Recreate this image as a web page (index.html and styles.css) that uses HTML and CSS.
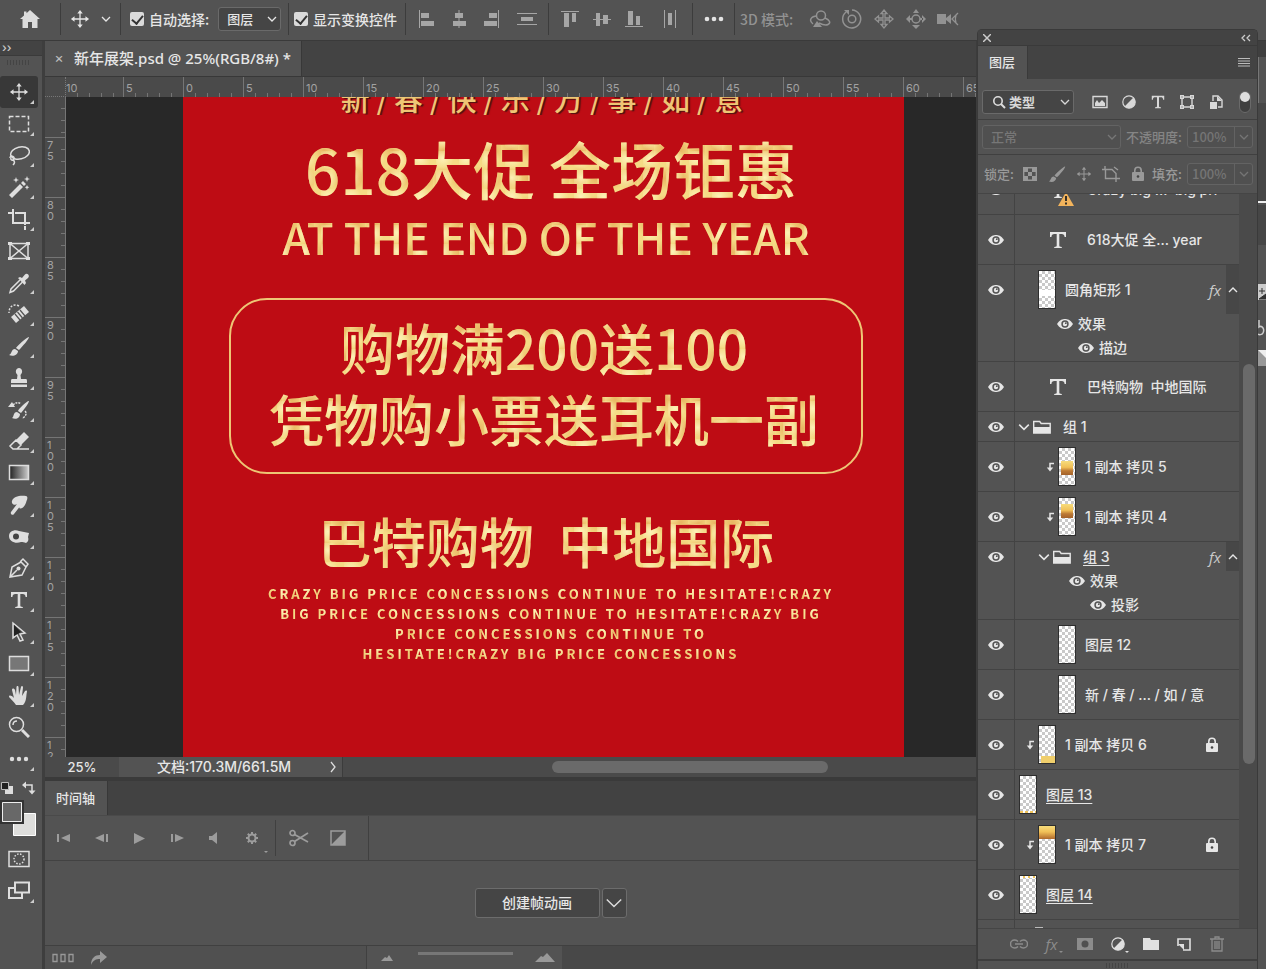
FILE: index.html
```
<!DOCTYPE html>
<html lang="zh-CN">
<head>
<meta charset="utf-8">
<meta name="viewport" content="width=device-width, initial-scale=1">
<title>新年展架.psd</title>
<link rel="stylesheet" href="styles.css">
</head>
<body>
<svg class="sprite" aria-hidden="true">
  <symbol id="move" viewBox="0 0 22 22"><path d="M11 3v16M3 11h16" fill="none" stroke="currentColor" stroke-width="1.4"/><path d="M11 1l3 4H8zM11 21l3-4H8zM1 11l4-3v6zM21 11l-4-3v6z" fill="currentColor"/></symbol>
  <symbol id="chev" viewBox="0 0 10 10"><path d="M1 3l4 4 4-4" fill="none" stroke="currentColor" stroke-width="1.3"/></symbol>
  <symbol id="chev-up" viewBox="0 0 10 10"><path d="M1 7l4-4 4 4" fill="none" stroke="currentColor" stroke-width="1.4"/></symbol>
  <symbol id="eye" viewBox="0 0 16 12"><path d="M0 6C3 1.500 5.500 1 8 1s5 .5 8 5c-3 4.500-5.500 5-8 5S3 10.500 0 6z" fill="currentColor"/><circle cx="8" cy="6" r="3.700" fill="#535353"/><circle cx="8" cy="6" r="2.200" fill="currentColor"/><circle cx="8.800" cy="5.200" r=".9" fill="#535353"/></symbol>
  <symbol id="type" viewBox="0 0 18 18"><path d="M1 1h16v5h-1.400c-.3-2.200-1-3-3-3H10.300v11.500c0 1 .6 1.300 2.500 1.400V17H5.200v-1.100c1.900-.1 2.500-.4 2.500-1.400V3H5.400c-2 0-2.700.8-3 3H1z" fill="currentColor"/></symbol>
  <symbol id="folder" viewBox="0 0 18 14"><path d="M.7 13V1.500h6l1.500 2h9V13z" fill="none" stroke="currentColor" stroke-width="1.400"/><path d="M1 7h16v6H1z" fill="currentColor"/></symbol>
  <symbol id="clip" viewBox="0 0 8 10"><path d="M8 1.500H4V6" fill="none" stroke="currentColor" stroke-width="1.500"/><path d="M.8 5.500h6.400L4 9.500z" fill="currentColor"/></symbol>
  <symbol id="lock" viewBox="0 0 14 16"><path d="M3.800 7V4.500a3.200 3.200 0 0 1 6.400 0V7" fill="none" stroke="currentColor" stroke-width="1.600"/><rect x="1" y="6" width="12" height="9" rx="1" fill="currentColor"/><circle cx="7" cy="10.500" r="1.300" fill="#444"/></symbol>
  <symbol id="adjust" viewBox="0 0 14 14"><circle cx="7" cy="7" r="6.200" fill="none" stroke="currentColor" stroke-width="1.200"/><path d="M11.400 2.600A6.200 6.200 0 1 1 2.600 11.400z" fill="currentColor"/></symbol>
</svg>

<div class="app">
  <header class="options">
    <button class="home" aria-label="主页"><svg width="22" height="20" viewBox="0 0 22 20"><path d="M11 1l10 9h-2.500v9H13v-6H9v6H3.500v-9H1L5 6.400V2.500h2.500v1.700z" fill="#dcdcdc"/></svg></button>
    <div class="group tool-preset"><svg class="i20"><use href="#move"/></svg><button aria-label="工具预设"><svg class="i10"><use href="#chev"/></svg></button></div>
    <div class="group auto">
      <label class="tick"><input type="checkbox" checked>自动选择:</label>
      <span class="select"><select aria-label="自动选择目标"><option>图层</option></select><svg class="i10"><use href="#chev"/></svg></span>
    </div>
    <div class="group show"><label class="tick"><input type="checkbox" checked>显示变换控件</label></div>
    <div class="group align">
      <button aria-label="左对齐"><svg class="i20" viewBox="0 0 20 20"><path d="M2.500 1v18" class="ln"/><path d="M4 4h8v5H4zM4 12h13v5H4z"/></svg></button>
      <button aria-label="水平居中对齐"><svg class="i20" viewBox="0 0 20 20"><path d="M10 1v18" class="ln"/><path d="M6 4h8v5H6zM4 12h13v5H4z"/></svg></button>
      <button aria-label="右对齐"><svg class="i20" viewBox="0 0 20 20"><path d="M17.500 1v18" class="ln"/><path d="M8 4h8v5H8zM3 12h13v5H3z"/></svg></button>
      <button class="wide" aria-label="垂直分布"><svg class="i20" viewBox="0 0 20 20"><path d="M0 4.500h20M0 15.500h20" class="ln"/><path d="M4 8h12v4H4z"/></svg></button>
    </div>
    <div class="group align second">
      <button aria-label="顶对齐"><svg class="i20" viewBox="0 0 20 20"><path d="M1 2.500h18" class="ln"/><path d="M4 4h5v14H4zM12 4h4v9h-4z"/></svg></button>
      <button aria-label="垂直居中对齐"><svg class="i20" viewBox="0 0 20 20"><path d="M1 10.500h18" class="ln"/><path d="M4 4h4v13H4zM11 6h5v9h-5z"/></svg></button>
      <button aria-label="底对齐"><svg class="i20" viewBox="0 0 20 20"><path d="M1 17.500h18" class="ln"/><path d="M4 2h5v14H4zM12 7h4v9h-4z"/></svg></button>
      <button class="wide" aria-label="水平分布"><svg class="i20" viewBox="0 0 20 20"><path d="M4.500 1v18M15.500 1v18" class="ln"/><path d="M8 4h4v12H8z"/></svg></button>
    </div>
    <div class="group more"><button aria-label="更多"><svg width="20" height="6" viewBox="0 0 20 6"><g fill="#e4e4e4"><circle cx="3" cy="3" r="2.300"/><circle cx="10" cy="3" r="2.300"/><circle cx="17" cy="3" r="2.300"/></g></svg></button></div>
    <div class="group mode">
      <span>3D 模式:</span>
      <button aria-label="环绕"><svg class="i22" viewBox="0 0 22 22"><g fill="none" stroke="#929292" stroke-width="1.500"><circle cx="12" cy="7.500" r="4.500"/><path d="M7 8C1 9 0 13 4 16M16 10c5 2 6 5 3 6.500-2 1-6 0-9-1.500"/></g><path d="M4 19h9l-5-6z" fill="#929292"/></svg></button>
      <button aria-label="滚动"><svg class="i22" viewBox="0 0 22 22"><g fill="none" stroke="#929292" stroke-width="1.500"><circle cx="11" cy="11" r="3.800"/><path d="M5 4a9 9 0 1 0 6-2"/></g><path d="M3 2h5v5z" fill="#929292"/></svg></button>
      <button aria-label="平移"><svg class="i22" viewBox="0 0 22 22"><path d="M11 2l3 3.500h-2v4.500h4.500V8l3.500 3-3.500 3v-2H12v4.500h2L11 20l-3-3.500h2V12H5.500v2L2 11l3.500-3v2H10V5.500H8z" fill="none" stroke="#929292" stroke-width="1.300"/></svg></button>
      <button aria-label="滑动"><svg class="i22" viewBox="0 0 22 22"><circle cx="11" cy="11" r="4" fill="none" stroke="#929292" stroke-width="1.500"/><path d="M11 1l3 4H8zM7 17h8l-4 4zM1 11l4-4v8zM21 11l-4-4v8zM4 10h3v2H4zM15 10h3v2h-3z" fill="#929292"/></svg></button>
      <button aria-label="缩放相机"><svg class="i22" viewBox="0 0 22 22"><path d="M0 6h9v10H0zM9 10l5-4v10l-5-4z" fill="#929292"/><path d="M21 5l-6 6 6 6M19 7c-1 3-1 5 0 8" fill="none" stroke="#929292" stroke-width="1.300"/></svg></button>
    </div>
  </header>

  <aside class="toolbar">
    <div class="expand">››</div>
    <div class="grip"></div>
    <nav class="tools">
      <button class="on" aria-label="移动"><svg class="i20"><use href="#move"/></svg></button>
      <button aria-label="选框"><svg class="i22" viewBox="0 0 22 22"><rect x="1.500" y="3.500" width="19" height="15" class="st" stroke-dasharray="4 2"/></svg></button>
      <button aria-label="套索"><svg class="i22" viewBox="0 0 22 22"><ellipse cx="12" cy="9" rx="9.500" ry="6" transform="rotate(-14 12 9)" class="st"/><path d="M2 14c0-3 5-2 4 1-1 2-4 1-3-1M5 16c2 1 2 3 0 5" class="st"/></svg></button>
      <button aria-label="魔棒"><svg class="i22" viewBox="0 0 22 22"><path d="M1 19L12 8l3 3L4 22zM13 7l2-2 3 3-2 2zM8 1l.8 2.200L11 4l-2.200.8L8 7l-.8-2.200L5 4l2.200-.8zM19 0l.8 2.200L22 3l-2.200.8L19 6l-.8-2.200L16 3l2.200-.8zM19 9l.7 1.600 1.600.7-1.600.7L19 14l-.7-2-1.600-.7 1.600-.7z"/></svg></button>
      <button aria-label="裁剪"><svg class="i22" viewBox="0 0 22 22"><path d="M5 1v14h12M0 5h4M7 5h10v12M17 18v4M18 15h4" class="st w2"/></svg></button>
      <button class="flat" aria-label="图框"><svg class="i22" viewBox="0 0 22 22"><path d="M2 3.500h18v15H2zM2 3.500l18 15M20 3.500l-18 15" class="st"/><path d="M0 2h4v3H0zM18 2h4v3h-4zM0 17h4v3H0zM18 17h4v3h-4z"/></svg></button>
      <button aria-label="吸管"><svg class="i22" viewBox="0 0 22 22"><path d="M12 8l-9 9-1 3.500L5.500 19l9-9" class="st"/><path d="M10 6l2-1 2 1 2.500-3c2.500-3 6 .5 3.500 3l-3 2.500 1 2.500-1.500 2z"/></svg></button>
      <button aria-label="修复画笔"><svg class="i22" viewBox="0 0 22 22"><path d="M3 14L16 3l5 6L8 20z"/><path d="M12 7l5 6M9.500 9l5 6M7 11l5 6" stroke="#535353" stroke-width="1.200"/><path d="M11 3C5 0 1 4 1 10" class="st" stroke-dasharray="2 1.500"/></svg></button>
      <button aria-label="画笔"><svg class="i22" viewBox="0 0 22 22"><path d="M21 2c-1-1-12 9-13 11l3 2C14 12 21 4 21 2zM7 14c-4 0-3 5-6 6 4 2 9 0 9-4z"/></svg></button>
      <button aria-label="图章"><svg class="i22" viewBox="0 0 22 22"><path d="M9 12l.5-4C6.500 5 8 1 11 1s4.500 4 1.500 7l.5 4h5c1 0 1 1 1 4H3c0-3 0-4 1-4zM3 17.500h16V20H3z"/></svg></button>
      <button aria-label="历史画笔"><svg class="i22" viewBox="0 0 22 22"><path d="M21 2c-1-1-10 7-11 10l3 2C15 12 21 4 21 2zM9 13c-4 0-3 5-5 6 4 2 8 0 8-4zM0 8l4-5 3 5z"/><path d="M5 6c3-3 6-3 8-1M17 12c3 3-1 7-3 7" class="st" stroke-dasharray="2 1"/></svg></button>
      <button aria-label="橡皮擦"><svg class="i22" viewBox="0 0 22 22"><path d="M8 10l8-8 5 5-8 8z"/><path d="M8 10l-6 6 3 3h4l4-4zM6 19h15" class="st"/></svg></button>
      <button aria-label="渐变"><svg class="i22" viewBox="0 0 22 22"><defs><linearGradient id="g"><stop stop-color="#222"/><stop offset="1" stop-color="#ccc"/></linearGradient></defs><rect x="1.500" y="3.500" width="19" height="14" fill="url(#g)" stroke="#ddd" stroke-width="1.500"/></svg></button>
      <button aria-label="涂抹"><svg class="i22" viewBox="0 0 22 22"><path d="M4 7c1-5 9-6 14-5 2 .5 1.500 3 .5 5-1 4-3 7-6 7.500-1 0-1.500-.5-1-1.500L6 20c-1.500 2-4 0-3-2l6-8c-2 2-6 0-5-3z"/></svg></button>
      <button aria-label="减淡"><svg class="i22" viewBox="0 0 22 22"><path d="M1 10C1 5 7 3 11 5l10 2-1 4c1 3 0 5-2 6-2-1-3-1-5-1-5 2-12 0-12-6z"/><circle cx="8" cy="10.500" r="3" class="hole"/></svg></button>
      <button aria-label="钢笔"><svg class="i22" viewBox="0 0 22 22"><path d="M2 20l2-10 9-5 5 5-4 8zM2 20l7-7M12 5l3-3 5 5-2 3" class="st"/><circle cx="10.500" cy="11.500" r="2"/></svg></button>
      <button aria-label="文字"><svg class="i18"><use href="#type"/></svg></button>
      <button aria-label="路径选择"><svg class="i22" viewBox="0 0 22 22"><path d="M5 2v15l4-3 3 6 3-1-3-6 5-1z" class="st"/><path d="M6 4v11l7-4z" fill="#222"/></svg></button>
      <button aria-label="矩形"><svg class="i22" viewBox="0 0 22 22"><rect x="1.500" y="3.500" width="19" height="14" fill="#777" stroke="#ddd" stroke-width="1.500"/></svg></button>
      <button aria-label="抓手"><svg class="i22" viewBox="0 0 22 22"><path d="M8 20C6 17 3 14 1 12c0-2 2-2 5 1L4 5c0-2 2-2 3 0l1 5 .5-8c0-1.500 2-1.500 2 0l.5 8 2-8c.5-1.500 2-1 2 .5L14 11l3-5c1-1 2-.5 2 .5C18 10 19 16 15 20z"/></svg></button>
      <button class="flat" aria-label="缩放"><svg class="i22" viewBox="0 0 22 22"><circle cx="8.500" cy="8.500" r="7" class="st"/><path d="M14 14l7 7" class="st w3"/><path d="M5 9c0-3 2-4 4-4" class="st"/></svg></button>
      <button aria-label="编辑工具栏"><svg class="i22" viewBox="0 0 22 22"><circle cx="4" cy="11" r="2.200"/><circle cx="11" cy="11" r="2.200"/><circle cx="18" cy="11" r="2.200"/></svg></button>
    </nav>
    <div class="mini"><svg width="14" height="14" viewBox="0 0 14 14"><path d="M5 5h8v8H5z" fill="#ddd"/><path d="M1.500 1.500h7v7h-7z" fill="#222" stroke="#bbb"/></svg><svg width="14" height="14" viewBox="0 0 14 14"><path d="M2 4h8v6" fill="none" stroke="#ddd" stroke-width="1.500"/><path d="M0 4l4-3.500v7zM6.500 9.500h7L10 13.500z" fill="#ddd"/></svg></div>
    <svg class="swatches" width="38" height="38" viewBox="0 0 38 38"><path d="M13.500 13.500h22v22h-22z" fill="#dededc" stroke="#fff"/><path d="M1 1h22v22H1z" fill="#686868" stroke="#333" stroke-width="2"/><path d="M2.500 2.500h19v19h-19z" fill="none" stroke="#eee"/></svg>
    <nav class="modes">
      <button class="flat" aria-label="快速蒙版"><svg class="i22" viewBox="0 0 22 22"><rect x="1" y="3.500" width="20" height="15" class="st"/><circle cx="11" cy="11" r="5" class="st" stroke-dasharray="1.500 1.500"/></svg></button>
      <button aria-label="屏幕模式"><svg class="i22" viewBox="0 0 22 22"><path d="M7 2.500h14v10H7zM7 8H1v10h13v-5" class="st w2"/></svg></button>
    </nav>
  </aside>

  <main class="work">
    <div class="tabs"><div class="tab"><button aria-label="关闭">×</button><span>新年展架.psd @ 25%(RGB/8#) *</span></div></div>
    <div class="ruler-row"><div class="corner"></div><div class="ruler-h"><span>10</span><span>5</span><span>0</span><span>5</span><span>10</span><span>15</span><span>20</span><span>25</span><span>30</span><span>35</span><span>40</span><span>45</span><span>50</span><span>55</span><span>60</span><span>65</span></div></div>
    <div class="stage">
      <div class="ruler-v"><span></span><span>7<br>5</span><span>8<br>0</span><span>8<br>5</span><span>9<br>0</span><span>9<br>5</span><span>1<br>0<br>0</span><span>1<br>0<br>5</span><span>1<br>1<br>0</span><span>1<br>1<br>5</span><span>1<br>2<br>0</span><span>1<br>2<br>5</span></div>
      <div class="canvas">
        <article class="poster">
          <p class="greet"><span>新 / 春 / 快 / 乐 / 万 / 事 / 如 / 意</span></p>
          <h1 class="gold">618大促 全场钜惠</h1>
          <h2 class="gold">AT THE END OF THE YEAR</h2>
          <div class="offer"><p class="gold">购物满200送100</p><p class="gold">凭物购小票送耳机一副</p></div>
          <p class="gold brand">巴特购物&nbsp; 中地国际</p>
          <p class="gold small">CRAZY BIG PRICE CONCESSIONS CONTINUE TO HESITATE!CRAZY<br>BIG PRICE CONCESSIONS CONTINUE TO HESITATE!CRAZY BIG<br>PRICE CONCESSIONS CONTINUE TO<br>HESITATE!CRAZY BIG PRICE CONCESSIONS</p>
        </article>
      </div>
    </div>
    <div class="status"><span class="zoom">25%</span><div class="doc"><span>文档:170.3M/661.5M</span><svg width="6" height="12" viewBox="0 0 6 12"><path d="M1 1l4 5-4 5" fill="none" stroke="#ddd" stroke-width="1.300"/></svg></div><div class="hscroll"><i></i></div></div>
    <section class="timeline">
      <div class="tabs2"><span>时间轴</span></div>
      <div class="controls">
        <div class="play">
          <button aria-label="首帧"><svg viewBox="0 0 18 18"><path d="M2 5h2v8H2zM15 5v8L6 9z"/></svg></button>
          <button aria-label="上一帧"><svg viewBox="0 0 18 18"><path d="M13 5h2v8h-2zM11 5v8L2 9z"/></svg></button>
          <button aria-label="播放"><svg viewBox="0 0 18 18"><path d="M3 4v11l11-5.500z"/></svg></button>
          <button aria-label="下一帧"><svg viewBox="0 0 18 18"><path d="M2 5h2v8H2zM6 5v8l9-4z"/></svg></button>
          <button aria-label="静音"><svg viewBox="0 0 18 18"><path d="M2 7h3l5-4v12l-5-4H2z"/></svg></button>
          <button class="corner-mark" aria-label="设置"><svg viewBox="0 0 18 18"><circle cx="7" cy="9" r="3.500" fill="none" stroke="currentColor" stroke-width="2"/><path d="M7 3v2.500M7 12.500V15M1 9h2.500M10.500 9H13M2.800 4.800l1.700 1.700M9.500 11.500l1.700 1.700M2.800 13.200l1.700-1.700M9.500 6.500l1.700-1.700" stroke="currentColor" stroke-width="2"/></svg></button>
        </div>
        <div class="cut">
          <button aria-label="拆分"><svg class="i20" viewBox="0 0 20 20"><g fill="none" stroke="currentColor" stroke-width="1.700"><circle cx="3.500" cy="5" r="2.500"/><circle cx="3.500" cy="15" r="2.500"/><path d="M5.500 6.500L19 14M5.500 13.500L19 5"/></g></svg></button>
          <button aria-label="过渡"><svg viewBox="0 0 18 18"><path d="M2 2h14v14H2z" fill="none" stroke="currentColor" stroke-width="1.500"/><path d="M16 2v14H2z"/></svg></button>
        </div>
      </div>
      <div class="body"><button class="create">创建帧动画</button><button class="drop" aria-label="更多动画类型"><svg width="18" height="18" viewBox="0 0 10 10"><path d="M1 3l4 4 4-4" fill="none" stroke="#ddd" stroke-width=".8"/></svg></button></div>
      <div class="foot">
        <div class="foot-left"><svg width="22" height="10" viewBox="0 0 22 10"><path d="M1 1.500h4v7H1zM9 1.500h4v7H9zM17 1.500h4v7h-4z" fill="none" stroke="#999" stroke-width="1.300"/></svg><svg width="18" height="14" viewBox="0 0 18 14"><path d="M1 14C1 7 5 4 10 4V0l7 6-7 6V8C6 8 3 9 1 14z" fill="#999"/></svg></div>
        <div class="foot-zoom"><svg width="12" height="6" viewBox="0 0 12 6"><path d="M0 6l4-4 2 1 2-3 4 6z" fill="#999"/></svg><i></i><svg width="20" height="9" viewBox="0 0 20 9"><path d="M0 9l6-6 2 1 4-4 8 9z" fill="#999"/></svg></div>
      </div>
    </section>
  </main>

  <aside class="dock"><div class="dock-strip"><i class="d1"></i><i class="d2"></i><i class="d3"></i><i class="d4"></i><i class="d5"></i><svg width="8" height="100" viewBox="0 0 8 100"><path d="M0 15h8v16H0z" fill="#ccc"/><path d="M1 22h6M4 19v6M1 30l7-5v5z" stroke="#333" fill="#333"/><path d="M1 51v7c3-2 6 2 4 6-1 2-4 2-5 1" fill="none" stroke="#ccc" stroke-width="1.500"/><path d="M0 81h8v16H0z" fill="#999"/><path d="M0 81l8 8v-8z" fill="#eee"/></svg></div></aside>

  <section class="panel">
    <div class="panel-bar"><button aria-label="关闭面板"><svg width="8" height="8" viewBox="0 0 8 8"><path d="M0 0l8 8M8 0L0 8" stroke="#ccc" stroke-width="1.500"/></svg></button><button aria-label="折叠"><svg width="10" height="8" viewBox="0 0 10 8"><path d="M4 1L1 4l3 3M9 1L6 4l3 3" fill="none" stroke="#ccc" stroke-width="1.300"/></svg></button></div>
    <div class="panel-tabs"><span>图层</span><button aria-label="面板菜单"><svg width="12" height="9" viewBox="0 0 12 9"><path d="M0 .5h12M0 3h12M0 5.500h12M0 8h12" stroke="#bbb"/></svg></button></div>
    <div class="filter">
      <span class="select kind"><svg class="i14" viewBox="0 0 14 14"><circle cx="6" cy="6" r="4.200" fill="none" stroke="#ddd" stroke-width="1.600"/><path d="M9 9l4 4" stroke="#ddd" stroke-width="2"/></svg><select aria-label="筛选类型"><option>类型</option></select><svg class="i10"><use href="#chev"/></svg></span>
      <button aria-label="像素图层"><svg width="16" height="14" viewBox="0 0 16 14"><path d="M1 1.500h14v11H1z" fill="none" stroke="currentColor" stroke-width="1.400"/><path d="M3 11V8l2-3 2 3 3-3 3 3v3z" fill="currentColor"/></svg></button>
      <button aria-label="调整图层"><svg class="i14"><use href="#adjust"/></svg></button>
      <button aria-label="文字图层"><svg class="i14"><use href="#type"/></svg></button>
      <button aria-label="形状图层"><svg class="i14" viewBox="0 0 14 14"><path d="M2 2h10v10H2z" fill="none" stroke="currentColor" stroke-width="1.400"/><path d="M0 0h4v4H0zM10 0h4v4h-4zM0 10h4v4H0zM10 10h4v4h-4z" fill="currentColor"/><path d="M1.500 1.500h1v1h-1zM11.500 1.500h1v1h-1zM1.500 11.500h1v1h-1zM11.500 11.500h1v1h-1z" fill="#444"/></svg></button>
      <button aria-label="智能对象"><svg class="i14" viewBox="0 0 14 14"><path d="M4 6V1h5l4 4v7H9" fill="none" stroke="currentColor" stroke-width="1.400"/><path d="M8 1v5h5M1 7h7v7H1z" fill="currentColor"/></svg></button>
      <button class="switch" aria-label="打开筛选"></button>
    </div>
    <div class="blend">
      <span class="select mode-sel"><select aria-label="混合模式" disabled><option>正常</option></select><svg class="i10"><use href="#chev"/></svg></span>
      <label for="op">不透明度:</label><span class="num"><input id="op" value="100%" disabled><button aria-label="不透明度滑块"><svg class="i10"><use href="#chev"/></svg></button></span>
    </div>
    <div class="locks">
      <span class="cap">锁定:</span>
      <button aria-label="锁定透明像素"><svg class="i14" viewBox="0 0 14 14"><path d="M.7.7h12.600v12.600H.7z" fill="none" stroke="currentColor" stroke-width="1.400"/><path d="M1 1h4v4H1zM9 1h4v4H9zM5 5h4v4H5zM1 9h4v4H1zM9 9h4v4H9z" fill="currentColor"/></svg></button>
      <button aria-label="锁定图像像素"><svg class="i18" viewBox="0 0 22 22"><path d="M21 2c-1-1-12 9-13 11l3 2C14 12 21 4 21 2zM7 14c-4 0-3 5-6 6 4 2 9 0 9-4z" fill="currentColor"/></svg></button>
      <button aria-label="锁定位置"><svg class="i16"><use href="#move"/></svg></button>
      <button aria-label="防止嵌套"><svg width="18" height="16" viewBox="0 0 18 16"><path d="M3 0v3M0 3.500h10l4 4V13M3.500 3.500v9H18M14 13v3M12 1l4 3" fill="none" stroke="currentColor" stroke-width="1.400"/></svg></button>
      <button aria-label="锁定全部"><svg class="i16"><use href="#lock"/></svg></button>
      <label for="fill">填充:</label><span class="num"><input id="fill" value="100%" disabled><button aria-label="填充滑块"><svg class="i10"><use href="#chev"/></svg></button></span>
    </div>
    <div class="list-wrap">
      <ul class="list">
        <li class="cut-row"><button class="eye"><svg><use href="#eye"/></svg></button><div class="cell"><div class="line text-line"><svg class="i18"><use href="#type"/></svg><span>Crazy big ...&nbsp; big pri</span><svg class="warn" width="16" height="14" viewBox="0 0 16 14"><path d="M8 0l8 14H0z" fill="#f3b45c"/><path d="M8 4v5M8 10.500v2" stroke="#222" stroke-width="1.800"/></svg></div></div></li>
        <li><button class="eye"><svg><use href="#eye"/></svg></button><div class="cell"><div class="line text-line"><svg class="i18"><use href="#type"/></svg><span>618大促 全... year</span></div></div></li>
        <li><button class="eye"><svg><use href="#eye"/></svg></button><div class="cell tall"><div class="line l1"><i class="lead"></i><i class="thumb band"></i><span>圆角矩形 1</span><em>fx</em><button class="fold"><svg class="i10"><use href="#chev-up"/></svg></button></div><div class="fx f1"><svg><use href="#eye"/></svg>效果</div><div class="fx f2"><svg><use href="#eye"/></svg>描边</div></div></li>
        <li><button class="eye"><svg><use href="#eye"/></svg></button><div class="cell"><div class="line text-line"><svg class="i18"><use href="#type"/></svg><span>巴特购物&nbsp; 中地国际</span></div></div></li>
        <li><button class="eye"><svg><use href="#eye"/></svg></button><div class="cell"><div class="line grp"><svg class="i12"><use href="#chev"/></svg><svg class="fold-ico"><use href="#folder"/></svg><span>组 1</span></div></div></li>
        <li><button class="eye"><svg><use href="#eye"/></svg></button><div class="cell"><div class="line l2"><i class="lead"><svg><use href="#clip"/></svg></i><i class="thumb gold-mid"></i><span>1 副本 拷贝 5</span></div></div></li>
        <li><button class="eye"><svg><use href="#eye"/></svg></button><div class="cell"><div class="line l2"><i class="lead"><svg><use href="#clip"/></svg></i><i class="thumb gold-high"></i><span>1 副本 拷贝 4</span></div></div></li>
        <li><button class="eye"><svg><use href="#eye"/></svg></button><div class="cell grp-tall"><div class="line grp in"><svg class="i12"><use href="#chev"/></svg><svg class="fold-ico"><use href="#folder"/></svg><span><u>组 3</u></span><em>fx</em><button class="fold"><svg class="i10"><use href="#chev-up"/></svg></button></div><div class="fx f3"><svg><use href="#eye"/></svg>效果</div><div class="fx f4"><svg><use href="#eye"/></svg>投影</div></div></li>
        <li><button class="eye"><svg><use href="#eye"/></svg></button><div class="cell"><div class="line l2"><i class="lead"></i><i class="thumb"></i><span>图层 12</span></div></div></li>
        <li><button class="eye"><svg><use href="#eye"/></svg></button><div class="cell"><div class="line l2"><i class="lead"></i><i class="thumb"></i><span>新 / 春 / ... / 如 / 意</span></div></div></li>
        <li><button class="eye"><svg><use href="#eye"/></svg></button><div class="cell"><div class="line l1"><i class="lead"><svg><use href="#clip"/></svg></i><i class="thumb gold-low"></i><span>1 副本 拷贝 6</span><svg class="lk"><use href="#lock"/></svg></div></div></li>
        <li><button class="eye"><svg><use href="#eye"/></svg></button><div class="cell"><div class="line"><i class="lead"></i><i class="thumb edge-low"></i><span><u>图层 13</u></span></div></div></li>
        <li><button class="eye"><svg><use href="#eye"/></svg></button><div class="cell"><div class="line l1"><i class="lead"><svg><use href="#clip"/></svg></i><i class="thumb gold-top"></i><span>1 副本 拷贝 7</span><svg class="lk"><use href="#lock"/></svg></div></div></li>
        <li><button class="eye"><svg><use href="#eye"/></svg></button><div class="cell"><div class="line"><i class="lead"></i><i class="thumb edge-top"></i><span><u>图层 14</u></span></div></div></li>
        <li class="tail"><i class="eye"></i><div class="cell"><i class="stub"></i></div></li>
      </ul>
      <div class="vscroll"><i></i></div>
    </div>
    <div class="actions">
      <button aria-label="链接图层"><svg width="18" height="10" viewBox="0 0 18 10"><path d="M8 2.500C6.500 1 5.500 1 4.500 1a4 4 0 0 0 0 8c1 0 2 0 3.500-1.500M10 2.500C11.500 1 12.500 1 13.500 1a4 4 0 0 1 0 8c-1 0-2 0-3.500-1.500M5 5h8" fill="none" stroke="currentColor" stroke-width="1.500"/></svg></button>
      <button class="corner-mark" aria-label="图层样式"><em>fx</em></button>
      <button aria-label="图层蒙版"><svg width="16" height="12" viewBox="0 0 16 12"><path d="M0 0h16v12H0z" fill="currentColor"/><circle cx="8" cy="6" r="3.500" fill="#505050"/></svg></button>
      <button class="lit corner-mark" aria-label="调整图层"><svg class="i14"><use href="#adjust"/></svg></button>
      <button class="lit" aria-label="新建组"><svg width="16" height="12" viewBox="0 0 16 12"><path d="M0 0h7l1 2h8v10H0z" fill="currentColor"/></svg></button>
      <button class="lit" aria-label="新建图层"><svg width="14" height="13" viewBox="0 0 14 13"><path d="M1 8V1h12v11H6" fill="none" stroke="currentColor" stroke-width="1.600"/><path d="M1 6h6v6z" fill="currentColor"/></svg></button>
      <button aria-label="删除"><svg width="14" height="16" viewBox="0 0 14 16"><path d="M0 3h14M5 3V1h4v2M2 3v12h10V3M5 5v8M7 5v8M9 5v8" fill="none" stroke="currentColor" stroke-width="1.300"/></svg></button>
    </div>
    <div class="panel-grip"></div>
  </section>
</div>
</body>
</html>
```
FILE: styles.css
```
* { box-sizing: border-box; }
body { margin: 0; background: #535353; color: #e6e6e6; font: 500 14px/18px Inter, "Noto Sans CJK SC", sans-serif; }
button, select, input { margin: 0; padding: 0; border: 0; background: none; color: inherit; font: inherit; }
button { display: inline-flex; align-items: center; justify-content: center; }
p, h1, h2, ul { margin: 0; padding: 0; }
svg { display: block; flex: none; }
.sprite { position: absolute; width: 0; height: 0; }
.i10 { width: 10px; height: 10px; }
.i12 { width: 12px; height: 12px; }
.i14 { width: 14px; height: 14px; }
.i16 { width: 16px; height: 16px; }
.i18 { width: 18px; height: 18px; }
.i20 { width: 20px; height: 20px; }
.i22 { width: 22px; height: 22px; }

.app { position: relative; display: grid; grid-template: 41px 1fr / 45px 1fr 290px; height: 100vh; overflow: hidden; }

/* options bar */
.options { grid-column: 1 / -1; display: flex; align-items: center; border-bottom: 1px solid #3a3a3a; padding-bottom: 2px; font-family: "Noto Sans CJK SC", sans-serif; white-space: nowrap; }
.home { width: 60px; height: 36px; }
.group { display: flex; align-items: center; height: 32px; border-left: 1px solid #3c3c3c; }
.tool-preset { width: 60px; padding-left: 9px; gap: 11px; }
.auto { width: 168px; padding-left: 9px; gap: 9px; }
.show { width: 117px; padding-left: 5px; }
.tick { display: flex; align-items: center; gap: 5px; }
.tick input { appearance: none; width: 14px; height: 14px; border-radius: 2px; background: #dadada; display: grid; place-items: center; }
.tick input:checked::after { content: ""; width: 5px; height: 9px; margin-bottom: 2px; border: solid #333; border-width: 0 2px 2px 0; transform: rotate(40deg); }
.select { display: flex; align-items: center; position: relative; border: 1px solid #6a6a6a; border-radius: 3px; background: #454545; }
.select select { appearance: none; flex: 1; min-width: 0; height: 22px; padding-left: 8px; opacity: 1; }
.select .i10 { position: absolute; right: 3px; pointer-events: none; }
.auto .select { width: 63px; }
.auto .select select { font-size: 13px; }
.align { width: 143px; padding-left: 5px; color: #a6a6a6; }
.align button { width: 32px; height: 28px; }
.align .wide { margin-left: 4px; }
.align path { fill: #a6a6a6; }
.align .ln { fill: none; stroke: #a6a6a6; stroke-width: 1; }
.align.second { width: 144px; }
.more { width: 42px; justify-content: center; }
.mode { padding-left: 5px; color: #929292; }
.mode span { width: 64px; }
.mode button { width: 32px; }

/* toolbar */
.toolbar { display: flex; flex-direction: column; border-right: 3px solid #3e3e3e; }
.expand { height: 15px; background: #434343; color: #ccc; padding-left: 2px; font-size: 12px; line-height: 13px; border-bottom: 1px solid #3a3a3a; }
.grip { width: 24px; height: 5px; margin: 4px 7px 11px; background: repeating-linear-gradient(90deg, #444 0 1px, #535353 1px 3px); }
.tools { display: grid; grid-auto-rows: 1fr; height: 699px; width: 38px; }
.tools button, .modes button { position: relative; width: 38px; color: #dedede; }
.tools button::after, .modes button::after, .corner-mark::after { content: ""; position: absolute; right: 4px; bottom: 4px; border: 2px solid; border-color: transparent #ccc #ccc transparent; }
.tools .flat::after, .modes .flat::after { display: none; }
.tools path, .tools circle { fill: #dedede; }
.tools path[fill="#222"] { fill: #222; }
.tools .hole { fill: #444; }
.toolbar .st { fill: none; stroke: #dedede; stroke-width: 1.5; }
.toolbar .w2 { stroke-width: 2; }
.toolbar .w3 { stroke-width: 3; }
.tools .on { background: #383838; border-radius: 3px; }
.mini { display: flex; justify-content: space-between; width: 36px; margin-top: 6px; }
.swatches { margin-top: 5px; }
.modes { display: grid; grid-auto-rows: 32px; margin-top: 5px; }

/* document */
.work { display: flex; flex-direction: column; min-width: 0; min-height: 0; }
.tabs { display: flex; height: 36px; background: #434343; border-bottom: 1px solid #383838; }
.tab { display: flex; align-items: center; gap: 9px; width: 257px; padding-left: 8px; padding-bottom: 2px; background: #535353; border-right: 1px solid #383838; font: 500 15px/20px "Noto Sans", "Noto Sans CJK SC", sans-serif; white-space: nowrap; }
.tab button { color: #bbb; width: 12px; }
.ruler-row { display: flex; height: 20px; background: #4a4a4a; }
.corner { width: 21px; flex: none; border-right: 1px dotted #777; border-bottom: 1px dotted #777; }
.ruler-h { flex: 1; display: flex; overflow: hidden; color: #a2a2a2; font-size: 11px; font-weight: 400; line-height: 20px; }
.ruler-h span { flex: none; width: 60px; padding-top: 1px; padding-left: 2px; border-left: 1px solid #757575; background: repeating-linear-gradient(90deg, transparent 0 11px, #757575 11px 12px) bottom / 100% 4px no-repeat; }
.ruler-h span:first-child { width: 57px; padding-left: 0; border: 0; }
.stage { flex: 1; display: flex; min-height: 0; }
.ruler-v { width: 21px; flex: none; overflow: hidden; background: #4a4a4a; border-right: 1px solid #757575; color: #a2a2a2; font-size: 11px; font-weight: 400; line-height: 11px; }
.ruler-v span { display: block; height: 60px; padding: 2px 0 0 2px; border-top: 1px solid #757575; background: repeating-linear-gradient(transparent 0 11px, #757575 11px 12px) right / 4px 100% no-repeat; }
.ruler-v span:first-child { height: 40px; border: 0; }
.canvas { flex: 1; display: flex; padding: 0 72px 0 117px; background: #282828; overflow: hidden; }
.poster { flex: 1; min-width: 0; background: #be0c14; text-align: center; white-space: nowrap; font-family: "Noto Sans CJK SC", sans-serif; font-weight: 500; padding: 0 41px 0 46px; }
.gold {
  color: transparent;
  background:
    radial-gradient(circle at 30% 40%, #fdf2b8 0, transparent 55%) 0 0 / 23px 19px,
    radial-gradient(circle at 60% 60%, #e8b562 0, transparent 60%) 0 0 / 17px 29px,
    #f5da85;
  background-clip: text;
}
.greet { display: flex; justify-content: center; align-items: flex-end; height: 18px; padding-right: 8px; overflow: hidden; color: #eec675; font-size: 29px; line-height: 34px; font-weight: 500; text-shadow: 2px 1px 1px #4d1410; }
.poster h1 { margin-top: 17px; padding-left: 10px; font-size: 62px; line-height: 72px; font-weight: 500; }
.poster h2 { margin-top: 2px; font-size: 44px; line-height: 60px; font-weight: 500; }
.offer { margin-top: 32px; padding: 11px 4px 19px 0; border: 2px solid #eec675; border-radius: 38px; font-size: 55px; line-height: 71px; }
.brand { margin-top: 31px; font-size: 54px; line-height: 72px; }
.small { margin-top: 7px; padding-left: 10px; font-size: 13px; line-height: 20px; letter-spacing: 3px; font-weight: 700; }
.status { display: flex; height: 20px; background: #4a4a4a; }
.zoom { width: 74px; text-align: center; font-size: 13px; line-height: 21px; }
.doc { display: flex; align-items: center; justify-content: space-between; width: 224px; padding: 0 6px 0 38px; background: #535353; border-right: 1px solid #3c3c3c; }
.hscroll { flex: 1; padding: 4px 0 0 209px; }
.hscroll i { display: block; width: 276px; max-width: 100%; height: 12px; border-radius: 6px; background: #6a6a6a; }

/* timeline */
.timeline { border-top: 4px solid #3a3a3a; }
.tabs2 { display: flex; height: 34px; background: #424242; }
.tabs2 span { width: 63px; padding-left: 11px; background: #535353; border-right: 1px solid #383838; line-height: 34px; font-size: 13px; }
.controls { display: flex; height: 46px; border-bottom: 1px solid #424242; color: #9c9c9c; border-top: 1px solid #4a4a4a; }
.controls svg { fill: currentColor; }
.controls button svg:not(.i20) { width: 18px; height: 18px; }
.play { display: flex; width: 231px; margin: 4px 0; border-right: 1px solid #404040; }
.play button { position: relative; width: 38px; }
.cut { display: flex; width: 93px; padding-left: 3px; border-right: 1px solid #404040; }
.cut button { width: 39px; }
.body { display: flex; align-items: center; justify-content: center; gap: 2px; height: 84px; padding-left: 80px; }
.create, .drop { height: 30px; border: 1px solid #6c6c6c; border-radius: 3px; background: #454545; }
.create { width: 125px; }
.drop { width: 25px; }
.foot { display: flex; height: 24px; background: #484848; border-top: 1px solid #404040; }
.foot-left { display: flex; align-items: center; gap: 16px; width: 322px; padding-left: 7px; background: #505050; border-right: 1px solid #404040; }
.foot-zoom { display: flex; align-items: center; width: 195px; padding-left: 14px; background: #535353; }
.foot-zoom i { width: 95px; height: 3px; margin: 0 22px 8px 25px; background: #777; }

/* docked column behind the floating panel */
.dock { display: flex; justify-content: flex-end; background: #3c3c3c; }
.dock-strip { width: 8px; background: #535353; }
.dock-strip i { display: block; }
.d1 { height: 16px; background: #3f3f3f; }
.d2 { height: 46px; border-left: 1px solid #777; }
.d3 { height: 98px; background: #474747; }
.d4 { height: 4px; border-top: 2px solid #eee; }
.d5 { height: 64px; background: #464646; border-bottom: 24px solid #535353; }

/* layers panel */
.panel { position: absolute; top: 29px; right: 8px; bottom: 0; width: 281px; display: flex; flex-direction: column; background: #535353; border: 1px solid #3a3a3a; border-bottom: 0; border-radius: 5px 5px 0 0; overflow: hidden; }
.panel-bar { display: flex; justify-content: space-between; height: 16px; padding: 0 6px 0 5px; background: #434343; border-bottom: 1px solid #3a3a3a; color: #ccc; }
.panel-tabs { display: flex; justify-content: space-between; height: 33px; background: #434343; padding-right: 7px; }
.panel-tabs span { width: 50px; padding-left: 11px; background: #535353; border-right: 1px solid #3a3a3a; line-height: 33px; font-size: 13px; }
.filter, .blend, .locks { display: flex; align-items: center; font-family: "Noto Sans CJK SC", sans-serif; font-size: 13px; white-space: nowrap; }
.filter { height: 41px; padding: 5px 4px 0; border-bottom: 1px solid #404040; color: #d8d8d8; }
.filter button { width: 29px; }
.kind { width: 92px; padding-left: 9px; margin-right: 11px; }
.kind select { padding-left: 3px; font-weight: 700; }
.filter .switch { width: 12px; height: 22px; margin-left: 9px; border-radius: 6px; background: #3f3f3f; border: 1px solid #6a6a6a; align-items: flex-start; }
.switch::before { content: ""; flex: none; width: 10px; height: 10px; border-radius: 5px; background: #dedede; }
.blend { height: 35px; padding-left: 4px; color: #858585; border-bottom: 1px solid #404040; }
.blend .select { border-color: #636363; background: #505050; }
.blend .mode-sel { width: 139px; margin-right: 5px; color: #777; }
.num { display: flex; width: 66px; height: 22px; margin-left: auto; margin-right: 4px; border: 1px solid #636363; border-radius: 3px; background: #505050; color: #757575; }
.num input { width: 47px; padding-left: 4px; border-right: 1px solid #636363; font-size: 13px; }
.num button { flex: 1; }
.locks { height: 38px; padding-left: 6px; color: #999; }
.locks > button { width: 27px; }
.cap { width: 32px; }
.locks label { margin-left: 1px; }
.list-wrap { flex: 1; display: flex; min-height: 0; border-top: 1px solid #454545; }
.list { flex: 1; overflow: hidden; list-style: none; }
.list li { display: flex; border-bottom: 1px solid #434343; }
.list .cut-row { margin-top: -29px; }
.eye { width: 37px; flex: none; border-right: 1px solid #434343; align-items: flex-start; padding-top: 19px; }
.eye svg, .fx svg { width: 16px; height: 12px; }
li:has(.grp) .eye { padding-top: 9px; }
.cell { flex: 1; min-width: 0; }
.line { position: relative; display: flex; align-items: center; height: 49px; white-space: nowrap; }
.line > span { margin-left: 9px; }
.lead { display: flex; justify-content: flex-end; width: 4px; padding-right: 4px; }
.lead svg { width: 8px; height: 10px; }
.l1 .lead { width: 23px; }
.l2 .lead { width: 43px; }
.text-line { padding-left: 34px; }
.text-line > span { margin-left: 20px; }
.warn { position: absolute; left: 43px; bottom: 8px; }
.grp { height: 29px; padding-left: 3px; gap: 3px; }
.grp.in { padding-left: 23px; }
.fold-ico { width: 18px; height: 14px; }
.line em { margin-left: auto; margin-right: 5px; }
.grp em { margin-right: 2px; }
em { font: italic 400 15px/18px "Open Sans", sans-serif; color: #ccc; }
.fold { width: 13px; height: 100%; background: #474747; }
.tall { height: 96px; }
.grp-tall { height: 77px; }
.fx { display: flex; align-items: center; gap: 5px; }
.f1, .f3 { height: 20px; }
.f2, .f4 { height: 28px; }
.f1 { padding-left: 42px; }
.f2 { padding-left: 63px; }
.f3 { padding-left: 54px; }
.f4 { padding-left: 75px; }
.lk { width: 14px; height: 16px; margin-left: auto; margin-right: 20px; }
.thumb { width: 18px; height: 39px; overflow: hidden; border: 1px solid #2e2e2e; background: conic-gradient(#c9c9c9 25%, #fff 0 50%, #c9c9c9 0 75%, #fff 0) 0 0 / 6px 6px; }
.thumb::before { content: ""; display: block; }
.band { padding-top: 19px; }
.band::before { height: 6px; background: #fff; }
.gold-mid { padding: 13px 2px 0; }
.gold-high { padding: 6px 2px 0; }
.gold-mid::before, .gold-high::before { height: 14px; background: linear-gradient(#f6dc7c, #f1c057 45%, #bd7a35 70%, #a3622b); }
.gold-low { padding: 30px 0 0 2px; }
.gold-low::before { height: 7px; background: #f0cf6c; }
.gold-top::before { height: 13px; background: linear-gradient(#f6dc7c, #f1c057 45%, #b06a2d); }
.edge-low { padding-top: 35px; }
.edge-low::before { height: 2px; background: repeating-linear-gradient(90deg, #f0c45c 0 3px, #fff 3px 5px); }
.edge-top::before { height: 2px; background: repeating-linear-gradient(90deg, #fff 0 3px, #f0c45c 3px 5px); }
u { text-underline-offset: 3px; }
.list .tail { height: 20px; border: 0; }
.stub { display: block; width: 8px; height: 2px; margin: 7px 0 0 20px; background: #bbb; }
.vscroll { width: 18px; padding: 170px 3px 0 4px; background: #4a4a4a; }
.vscroll i { display: block; width: 12px; height: 400px; border-radius: 6px; background: #6a6a6a; }
.actions { display: flex; align-items: center; height: 31px; padding-left: 24px; border-top: 1px solid #454545; color: #8c8c8c; }
.actions button { position: relative; width: 33px; height: 24px; }
.actions em { color: #8c8c8c; }
.actions .lit { color: #e0e0e0; }
.corner-mark::after { right: 5px; bottom: 1px; border-color: currentColor transparent transparent; }
.panel-grip { height: 10px; border-top: 2px solid #3e3e3e; background: repeating-linear-gradient(90deg, #444 0 1px, transparent 1px 3px) center 2px / 24px 5px no-repeat; }
```
